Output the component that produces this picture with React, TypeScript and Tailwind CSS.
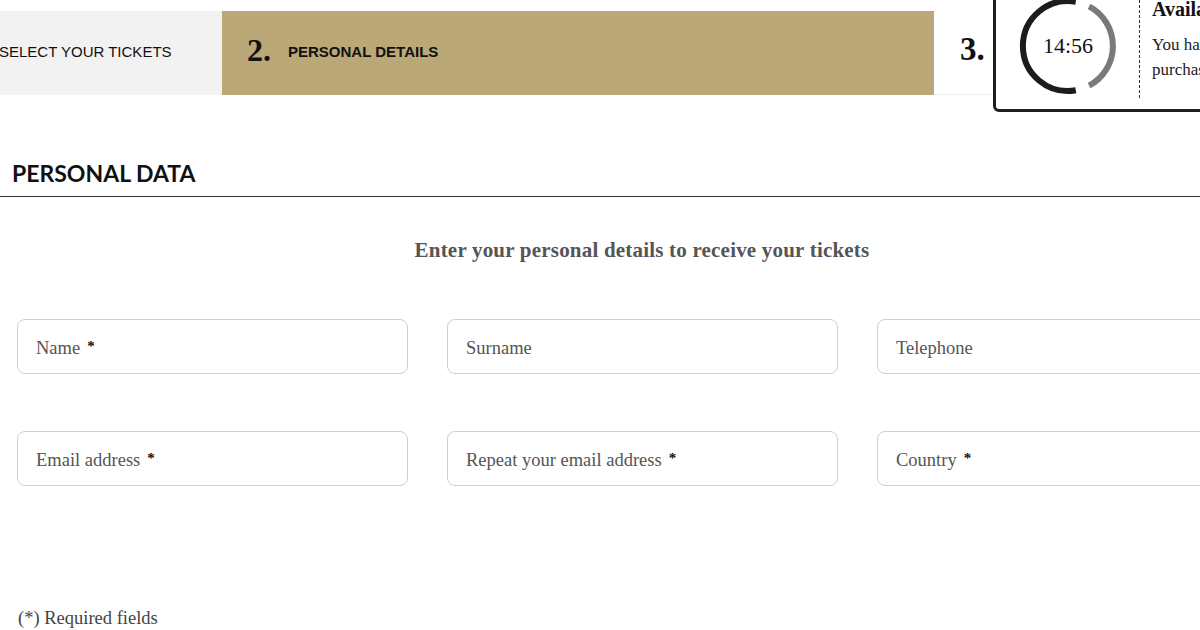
import React from "react";

const serif = "font-['Liberation_Serif','Times_New_Roman',serif]";
const sans = "font-['Liberation_Sans',Arial,sans-serif]";

const fields = [
  { label: "Name", required: true },
  { label: "Surname", required: false },
  { label: "Telephone", required: false },
  { label: "Email address", required: true },
  { label: "Repeat your email address", required: true },
  { label: "Country", required: true },
];

function TimerRing() {
  return (
    <svg width="100" height="100" viewBox="0 0 100 100" className="shrink-0">
      <path d="M57.8 5.7 A45 45 0 1 0 57.8 94.3" fill="none" stroke="#1c1c1c" strokeWidth="6" />
      <path d="M71.1 10.3 A45 45 0 0 1 71.1 89.7" fill="none" stroke="#7a7a7a" strokeWidth="6" />
    </svg>
  );
}

export default function App() {
  return (
    <div className="relative w-[1200px] h-[630px] overflow-hidden bg-white text-[#111]">
      {/* === STEPS === */}
      <div className="flex h-[84px] mt-[11px]">
        <div className={`w-[222px] bg-[#f2f2f2] flex items-center ${sans}`}>
          <span className="-ml-[1px] -mt-[2px] text-[15px]">SELECT YOUR TICKETS</span>
        </div>
        <div className="w-[712px] bg-[#bba878] flex items-center pl-[25px]">
          <span className={`${serif} font-bold text-[32px] leading-none -mt-[6px]`}>2.</span>
          <span className={`${sans} font-bold text-[15px] ml-[17px] -mt-[2px]`}>PERSONAL DETAILS</span>
        </div>
        <div className="flex-1 flex items-center pl-[26px] border-b border-[#eee]">
          <span className={`${serif} font-bold text-[33px] leading-none -mt-[6px]`}>3.</span>
        </div>
      </div>

      {/* === TIMER === */}
      <div className="absolute left-[993px] top-[-12px] w-[320px] h-[124px] border-[3px] border-[#1e1e1e] rounded-bl-[6px] bg-white flex items-start">
        <div className="relative ml-[22px] mt-[5px]">
          <TimerRing />
          <span className={`${serif} absolute inset-0 flex items-center justify-center text-[22px] pb-[2px]`}>14:56</span>
        </div>
        <div className="ml-[21px] mt-[9px] h-[98px] border-l border-dashed border-[#333]"></div>
        <div className={`${serif} ml-[12px] pt-[5px] whitespace-nowrap`}>
          <div className="font-bold text-[20px] leading-[26px]">Available time</div>
          <div className="text-[17px] leading-[25px] mt-[10px] text-[#222]">You have 15 minutes to complete your</div>
          <div className="text-[17px] leading-[25px] text-[#222]">purchase</div>
        </div>
      </div>

      {/* === PERSONAL DATA === */}
      <div className="mt-[64px] border-b-[1.5px] border-[#333] pb-[9px] pl-[12px]">
        <h1 className="font-['Lato',sans-serif] font-bold text-[23px] leading-[28px]">PERSONAL DATA</h1>
      </div>

      <p className={`${serif} font-bold text-[21px] tracking-[0.2px] text-[#555] text-center mt-[38px] ml-[84px]`}>
        Enter your personal details to receive your tickets
      </p>

      <div className="grid grid-cols-[391px_391px_391px] gap-x-[39px] gap-y-[57px] ml-[17px] mt-[52px] w-max">
        {fields.map((f) => (
          <div
            key={f.label}
            className={`h-[55px] rounded-[8px] border border-[#cfcfcf] flex items-center pl-[18px] pt-[5px] ${serif} text-[18.5px] text-[#555]`}
          >
            {f.label}
            {f.required && <span className="text-[#111] font-bold text-[15px] ml-[7px] -mt-[5px]">*</span>}
          </div>
        ))}
      </div>

      <p className={`${serif} text-[18.5px] text-[#444] absolute left-[18px] top-[605px]`}>(*) Required fields</p>
    </div>
  );
}
